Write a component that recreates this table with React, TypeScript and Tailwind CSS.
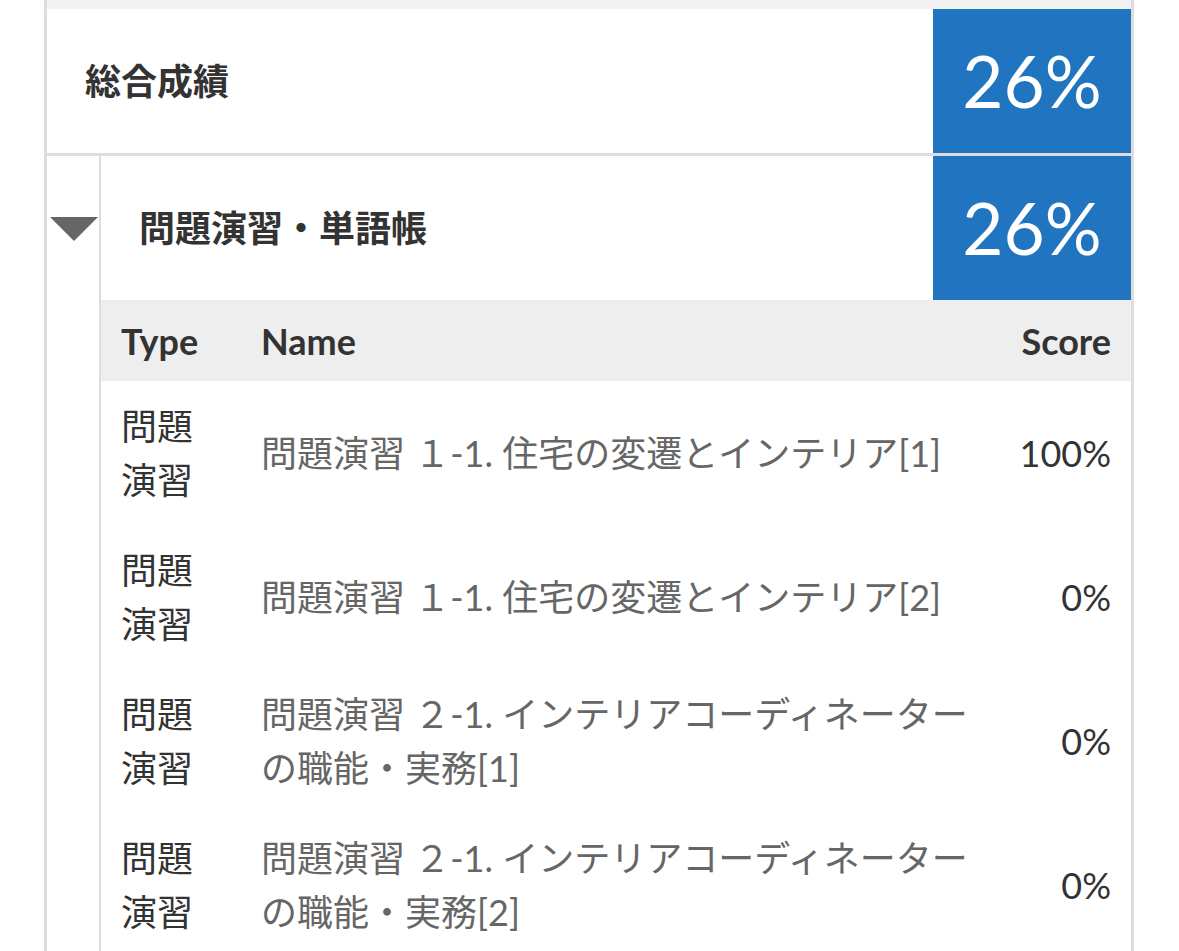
import React from "react";

const rows = [
  { type: ["問題", "演習"], name: "問題演習 １-1. 住宅の変遷とインテリア[1]", score: "100%" },
  { type: ["問題", "演習"], name: "問題演習 １-1. 住宅の変遷とインテリア[2]", score: "0%" },
  { type: ["問題", "演習"], name: "問題演習 ２-1. インテリアコーディネーターの職能・実務[1]", score: "0%" },
  { type: ["問題", "演習"], name: "問題演習 ２-1. インテリアコーディネーターの職能・実務[2]", score: "0%" },
];

export default function App() {
  return (
    <div className="w-[1179px] h-[951px] overflow-hidden bg-white font-['Lato','Noto_Sans_CJK_JP',sans-serif] text-[#333]">
      <div className="ml-[44px] w-[1090px] min-h-[951px] border-x-[3px] border-[#dddddd]">
        <div className="h-[9px] bg-[#f2f2f2]" />
        <div className="flex h-[144px]">
          <div className="flex flex-1 items-center pl-[38px] text-[36px] font-bold">総合成績</div>
          <div className="flex w-[198px] items-center justify-center bg-[#2174bf] text-[71px] font-normal text-white">
            26%
          </div>
        </div>
        <div className="h-[3px] bg-[#dddddd]" />
        <div className="flex">
          <div className="flex h-[144px] w-[52px] items-center justify-center">
            <svg width="48" height="24" viewBox="0 0 48 24" className="mt-[2px] ml-[1px]">
              <polygon points="0,0 48,0 24,24" fill="#666666" />
            </svg>
          </div>
          <div className="flex-1 border-l-2 border-[#dddddd]">
            <div className="flex h-[144px]">
              <div className="flex flex-1 items-center pl-[38px] text-[36px] font-bold">問題演習・単語帳</div>
              <div className="flex w-[198px] items-center justify-center bg-[#2174bf] text-[71px] font-normal text-white">
                26%
              </div>
            </div>
            <div className="grid h-[81px] grid-cols-[140px_765px_1fr] items-center bg-[#eeeeee] text-[36px] font-bold">
              <div className="pl-5">Type</div>
              <div className="pl-5">Name</div>
              <div className="pr-5 text-right">Score</div>
            </div>
            {rows.map((r, i) => (
              <div key={i} className="grid h-[144px] grid-cols-[140px_765px_1fr] items-center text-[36px] leading-[54px]">
                <div className="pl-5 text-[#333]">
                  {r.type.map((t) => (
                    <div key={t}>{t}</div>
                  ))}
                </div>
                <div className="pl-5 pr-5 text-[#666]">{r.name}</div>
                <div className="pr-5 text-right text-[#333]">{r.score}</div>
              </div>
            ))}
          </div>
        </div>
      </div>
    </div>
  );
}
